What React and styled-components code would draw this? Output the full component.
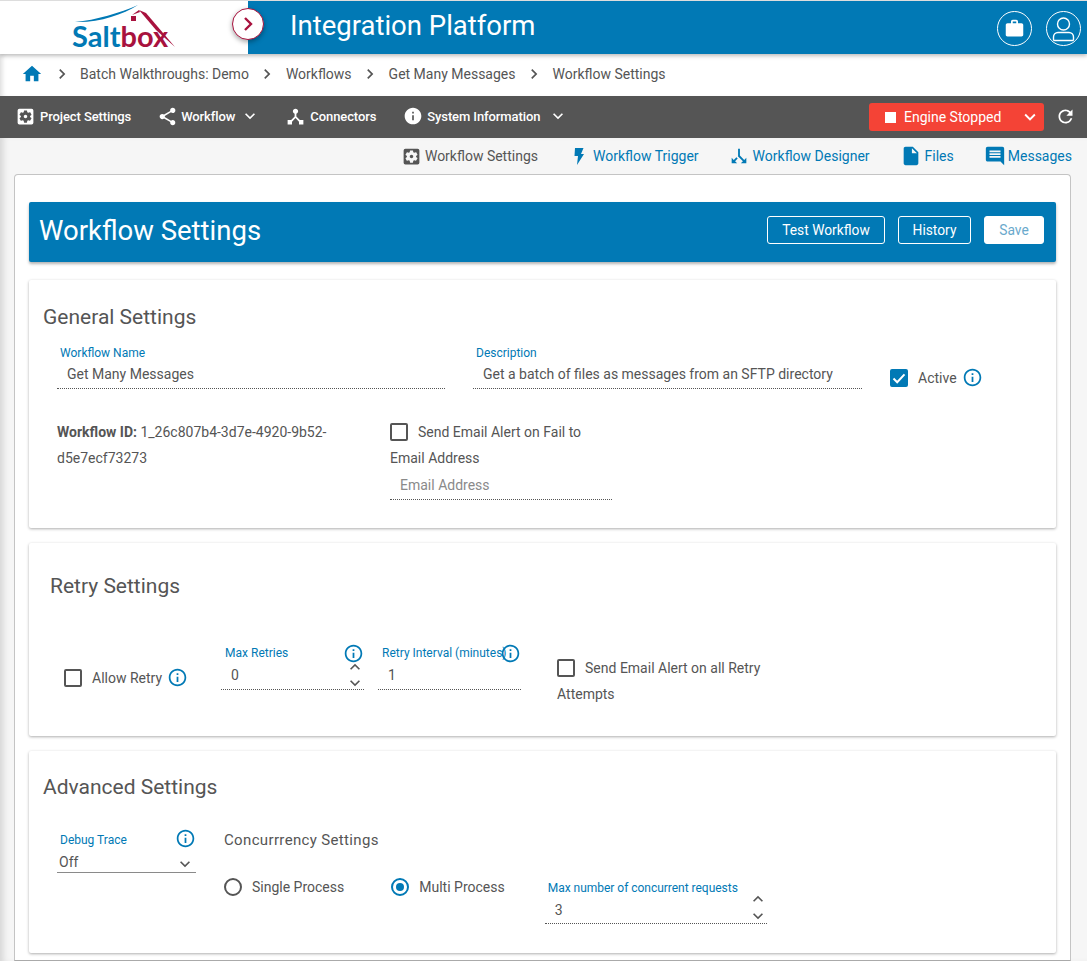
import React from "react";
import styled, { createGlobalStyle } from "styled-components";
import {
  MdHome, MdChevronRight, MdSettingsApplications, MdShare, MdKeyboardArrowDown, MdKeyboardArrowUp,
  MdDeviceHub, MdInfo, MdInfoOutline, MdRefresh, MdCallSplit, MdInsertDriveFile, MdMessage, MdWork,
} from "react-icons/md";

const BLUE = "#0179b5";
const RED = "#a8123e";

const Global = createGlobalStyle`
  html, body { margin: 0; padding: 0; background: #fff; }
  body { font-family: Roboto, "Liberation Sans", sans-serif; color: #555; overflow: hidden; }
  * { box-sizing: border-box; }
`;

const Page = styled.div`
  width: 1087px;
  height: 961px;
  overflow: hidden;
  background: #f6f6f6;
`;

const Header = styled.header`
  position: relative;
  z-index: 3;
  height: 54px;
  border-top: 1px solid #ddd;
  display: flex;
  background: ${BLUE};
  box-shadow: 0 2px 4px rgba(0, 0, 0, 0.25);
`;
const LogoPane = styled.div`
  position: relative;
  width: 248px;
  background: #fff;
  padding: 20px 0 0 72px;
`;
const LogoText = styled.div`
  font-family: Lato, Roboto, sans-serif;
  font-size: 29px;
  line-height: 30px;
  font-weight: 700;
  color: ${BLUE};
  span { color: ${RED}; }
`;
const LogoRoof = styled.svg`
  position: absolute;
  left: 70px;
  top: 3px;
`;
const Collapse = styled.button`
  position: absolute;
  left: 232px;
  top: 7px;
  width: 32px;
  height: 32px;
  border-radius: 50%;
  padding: 0;
  border: 1.5px solid ${RED};
  background: #fff;
  display: flex;
  align-items: center;
  justify-content: center;
  box-shadow: 0 2px 5px rgba(0, 0, 0, 0.35);
`;
const AppTitle = styled.h1`
  flex: 1;
  margin: 0;
  padding-left: 42px;
  font-size: 27.5px;
  line-height: 50px;
  font-weight: 400;
  color: #fff;
`;
const HeaderIcons = styled.div`
  display: flex;
  gap: 14px;
  padding: 10px 6px 0 0;
`;
const RoundIcon = styled.div`
  width: 35px;
  height: 35px;
  border-radius: 50%;
  border: 1px solid #fff;
  color: #fff;
  display: flex;
  align-items: center;
  justify-content: center;
`;

const Crumbs = styled.nav`
  height: 42px;
  background: #fff;
  display: flex;
  align-items: center;
  padding: 0 0 2px 21px;
  font-size: 14px;
  color: #555;
  box-shadow: inset 5px 0 5px -3px rgba(0, 0, 0, 0.14);
`;
const Crumb = styled.span`
  line-height: 20px;
`;
const CrumbSep = styled(MdChevronRight)`
  margin: 0 8.5px;
  font-size: 20px;
  color: #555;
`;

const Toolbar = styled.div`
  height: 42px;
  background: #555;
  display: flex;
  align-items: center;
  padding-left: 15px;
  color: #fff;
  font-size: 13px;
  font-weight: 500;
  letter-spacing: -0.1px;
`;
const ToolItem = styled.div`
  display: flex;
  align-items: center;
  margin-right: ${(p) => p.$gap}px;
  margin-top: -2px;
  gap: ${(p) => p.$iconGap}px;
  white-space: nowrap;
`;
const ToolChevron = styled(MdKeyboardArrowDown)`
  margin-left: ${(p) => p.$left}px;
`;
const ToolSpacer = styled.div`
  flex: 1;
`;
const EngineButton = styled.div`
  width: 175px;
  height: 28px;
  border-radius: 3px;
  background: #f44336;
  display: flex;
  align-items: center;
  padding: 0 3px 0 16px;
  font-size: 14px;
  font-weight: 400;
  letter-spacing: 0;
  color: #fff;
`;
const StopSquare = styled.i`
  width: 11px;
  height: 11px;
  background: #fff;
  margin-right: 8px;
`;
const EngineLabel = styled.span`
  flex: 1;
`;
const Refresh = styled(MdRefresh)`
  font-size: 21px;
  margin: -2px 11px 0 11px;
  color: #fff;
`;

const Main = styled.main`
  height: 823px;
  box-shadow: inset 7px 0 7px -4px rgba(0, 0, 0, 0.14);
`;
const Tabs = styled.div`
  height: 36px;
  display: flex;
  justify-content: flex-end;
  align-items: center;
  padding-right: 15px;
  gap: 30px;
  font-size: 14px;
`;
const Tab = styled.div`
  display: flex;
  align-items: center;
  gap: ${(p) => p.$gap}px;
  margin-right: ${(p) => p.$trim || 0}px;
  color: ${(p) => (p.$active ? "#555" : BLUE)};
  white-space: nowrap;
`;
const SplitIcon = styled(MdCallSplit)`
  transform: rotate(180deg);
`;
const MessageIcon = styled(MdMessage)`
  transform: scaleX(-1);
`;

const Shell = styled.div`
  height: 787px;
  margin: 0 16px 0 14px;
  border: 1px solid #c4c4c4;
  border-bottom-color: #aaa;
  border-radius: 4px 4px 0 0;
  background: #fff;
  padding: 27px 14px 0;
`;
const TitleBar = styled.div`
  height: 60px;
  border-radius: 2px;
  background: ${BLUE};
  display: flex;
  align-items: center;
  padding: 0 12px 4px 10px;
  color: #fff;
  box-shadow: 0 2px 3px rgba(0, 0, 0, 0.3);
`;
const PageTitle = styled.h2`
  flex: 1;
  margin: 0;
  font-size: 27.5px;
  font-weight: 400;
`;
const Action = styled.button`
  width: ${(p) => p.$w}px;
  height: 28px;
  margin-left: 13px;
  padding: 0;
  border-radius: 3px;
  border: 1px solid #fff;
  background: ${(p) => (p.$solid ? "#fff" : "transparent")};
  color: ${(p) => (p.$solid ? "#6aa9cc" : "#fff")};
  font: 400 13.8px Roboto, sans-serif;
`;
const Section = styled.section`
  height: ${(p) => p.$h}px;
  margin-top: ${(p) => p.$top}px;
  background: #fff;
  border-radius: 2px;
  box-shadow: 0 1px 3px rgba(0, 0, 0, 0.32);
  padding-left: 28px;
`;
const SectionTitle = styled.h3`
  margin: 0 0 0 ${(p) => p.$x}px;
  padding-top: ${(p) => p.$top}px;
  font-size: 21px;
  line-height: 24px;
  font-weight: 400;
  color: #555;
`;
const Row = styled.div`
  display: flex;
  align-items: flex-start;
  padding-top: ${(p) => p.$top || 0}px;
`;
const Field = styled.div`
  position: relative;
  flex: none;
  width: ${(p) => p.$w}px;
  height: ${(p) => p.$h || 43}px;
  margin-left: ${(p) => p.$left || 0}px;
  margin-top: ${(p) => p.$top || 0}px;
  border-bottom: 1px dotted #555;
`;
const FieldLabel = styled.label`
  display: block;
  padding-left: ${(p) => p.$pad || 3}px;
  font-size: 12px;
  line-height: 14px;
  letter-spacing: ${(p) => p.$track || 0}px;
  color: ${BLUE};
  white-space: nowrap;
`;
const FieldValue = styled.div`
  margin-top: ${(p) => p.$mt || 5}px;
  padding-left: 10px;
  font-size: 14px;
  line-height: 18px;
  color: ${(p) => (p.$muted ? "#8a8a8a" : "#555")};
  white-space: nowrap;
`;
const Info = styled(MdInfoOutline)`
  font-size: 21px;
  flex: none;
  margin-left: -5px;
  color: ${BLUE};
`;
const FieldInfo = styled(MdInfoOutline)`
  position: absolute;
  right: 0;
  top: ${(p) => p.$top}px;
  font-size: 21px;
  color: ${BLUE};
`;
const Spinner = styled.div`
  position: absolute;
  right: -1px;
  top: ${(p) => p.$top}px;
  display: flex;
  flex-direction: column;
  color: #555;
  svg { display: block; width: 20px; height: 20px; margin: ${(p) => p.$tight}px 0; }
`;
const CheckBox = styled.span`
  width: 18px;
  height: 18px;
  flex: none;
  border-radius: 2px;
  border: 2px solid ${(p) => (p.$on ? BLUE : "#555")};
  background: ${(p) => (p.$on ? BLUE : "#fff")};
  display: inline-flex;
  align-items: center;
  justify-content: center;
`;
const CheckLabel = styled.div`
  display: flex;
  align-items: center;
  gap: 10px;
  margin-left: ${(p) => p.$left || 0}px;
  margin-top: ${(p) => p.$top || 0}px;
  font-size: 14px;
  line-height: 18px;
  white-space: nowrap;
`;
const Column = styled.div`
  width: ${(p) => p.$w}px;
  margin-left: ${(p) => p.$left || 0}px;
  margin-top: ${(p) => p.$top || 0}px;
  font-size: 14px;
  line-height: 26px;
  flex: none;
`;
const Wrapped = styled.div`
  margin-top: 4px;
  line-height: 26px;
`;
const Select = styled.div`
  position: relative;
  flex: none;
  width: 139px;
  height: 40px;
  border-bottom: 1px solid #8a8a8a;
`;
const SelectValue = styled.div`
  margin-top: 6px;
  padding-left: 2px;
  font-size: 14px;
  line-height: 18px;
`;
const SelectChevron = styled(MdKeyboardArrowDown)`
  position: absolute;
  right: 1px;
  top: 21px;
  font-size: 20px;
`;
const SubTitle = styled.div`
  font-size: 15px;
  line-height: 20px;
  letter-spacing: 0.35px;
`;
const Radio = styled.span`
  width: 18px;
  height: 18px;
  border-radius: 50%;
  flex: none;
  border: 2px solid ${(p) => (p.$on ? BLUE : "#555")};
  display: inline-flex;
  align-items: center;
  justify-content: center;
  &::after {
    content: "";
    width: 8px;
    height: 8px;
    border-radius: 50%;
    background: ${(p) => (p.$on ? BLUE : "transparent")};
  }
`;

const Tick = () => (
  <svg width="14" height="14" viewBox="0 0 14 14"><path d="M1.5 7.5l3.7 3.7L12.5 3.4" fill="none" stroke="#fff" strokeWidth="2" /></svg>
);
const Bolt = () => (
  <svg width="25" height="17" viewBox="-6 0 25 17"><path d="M1 0H9.5L7 6H10L3 17L4 8H0.5Z" fill={BLUE} /></svg>
);
const Person = () => (
  <svg width="33" height="33" viewBox="0 0 33 33" fill="none" stroke="#fff" strokeWidth="1.4">
    <circle cx="16.5" cy="12" r="6" />
    <path d="M11 20.5h11a4.5 4.5 0 0 1 4.5 4.5v2.5a1 1 0 0 1-1 1h-18a1 1 0 0 1-1-1V25a4.5 4.5 0 0 1 4.5-4.5Z" />
  </svg>
);

export default function App() {
  return (
    <Page>
      <Global />
      <Header>
        <LogoPane>
          <LogoRoof width="110" height="46" viewBox="0 0 110 46">
            <path d="M5 18C26 16 50 9 68 1C52 11 28 19 5 18Z" fill={BLUE} />
            <path d="M69 6L76 9L105 43L86 26Z" fill={RED} />
            <path d="M69 6L62 11L70 8Z" fill={RED} />
            <rect x="61" y="12" width="5" height="5" fill={RED} />
          </LogoRoof>
          <LogoText>Salt<span>box</span></LogoText>
          <Collapse aria-label="Expand">
            <svg width="14" height="16" viewBox="0 0 14 16"><path d="M4 2l6 6-6 6" fill="none" stroke={RED} strokeWidth="2.4" /></svg>
          </Collapse>
        </LogoPane>
        <AppTitle>Integration Platform</AppTitle>
        <HeaderIcons>
          <RoundIcon><MdWork size={21} /></RoundIcon>
          <RoundIcon><Person /></RoundIcon>
        </HeaderIcons>
      </Header>

      <Crumbs>
        <MdHome size={22} color={BLUE} />
        <CrumbSep /><Crumb>Batch Walkthroughs: Demo</Crumb>
        <CrumbSep /><Crumb>Workflows</Crumb>
        <CrumbSep /><Crumb>Get Many Messages</Crumb>
        <CrumbSep /><Crumb>Workflow Settings</Crumb>
      </Crumbs>

      <Toolbar>
        <ToolItem $gap={26} $iconGap={4}><MdSettingsApplications size={21} />Project Settings</ToolItem>
        <ToolItem $gap={25} $iconGap={3}><MdShare size={21} />Workflow<ToolChevron $left={2} size={20} /></ToolItem>
        <ToolItem $gap={27} $iconGap={4}><MdDeviceHub size={21} />Connectors</ToolItem>
        <ToolItem $gap={0} $iconGap={4}><MdInfo size={20} />System Information<ToolChevron $left={4} size={20} /></ToolItem>
        <ToolSpacer />
        <EngineButton><StopSquare /><EngineLabel>Engine Stopped</EngineLabel><MdKeyboardArrowDown size={22} /></EngineButton>
        <Refresh />
      </Toolbar>

      <Main>
        <Tabs>
          <Tab $active $gap={3}><MdSettingsApplications size={21} />Workflow Settings</Tab>
          <Tab $gap={0} $trim={-1}><Bolt />Workflow Trigger</Tab>
          <Tab $gap={3}><SplitIcon size={22} />Workflow Designer</Tab>
          <Tab $gap={3}><MdInsertDriveFile size={22} />Files</Tab>
          <Tab $gap={2}><MessageIcon size={22} />Messages</Tab>
        </Tabs>

        <Shell>
          <TitleBar>
            <PageTitle>Workflow Settings</PageTitle>
            <Action $w={118}>Test Workflow</Action>
            <Action $w={73}>History</Action>
            <Action $w={60} $solid>Save</Action>
          </TitleBar>

          <Section $top={18} $h={248}>
            <SectionTitle $x={-14} $top={25}>General Settings</SectionTitle>
            <Row $top={17}>
              <Field $w={388}><FieldLabel>Workflow Name</FieldLabel><FieldValue>Get Many Messages</FieldValue></Field>
              <Field $w={389} $left={28}><FieldLabel>Description</FieldLabel><FieldValue>Get a batch of files as messages from an SFTP directory</FieldValue></Field>
              <CheckLabel $left={28} $top={21}><CheckBox $on><Tick /></CheckBox>Active<Info /></CheckLabel>
            </Row>
            <Row $top={30}>
              <Column $w={290}><b>Workflow ID:</b> 1_26c807b4-3d7e-4920-9b52-d5e7ecf73273</Column>
              <Column $w={222} $left={43}>
                <CheckLabel $top={4}><CheckBox />Send Email Alert on Fail to</CheckLabel>
                <Wrapped>Email Address</Wrapped>
                <Field $w={222} $h={24}><FieldValue $muted>Email Address</FieldValue></Field>
              </Column>
            </Row>
          </Section>

          <Section $top={15} $h={193}>
            <SectionTitle $x={-7} $top={31}>Retry Settings</SectionTitle>
            <Row $top={48}>
              <CheckLabel $left={7} $top={21}><CheckBox />Allow Retry<Info /></CheckLabel>
              <Field $w={143} $left={33} $h={44}><FieldLabel $pad={4}>Max Retries</FieldLabel><FieldValue $mt={6}>0</FieldValue><FieldInfo $top={-3} /><Spinner $top={13} $tight={-2}><MdKeyboardArrowUp /><MdKeyboardArrowDown /></Spinner></Field>
              <Field $w={143} $left={14} $h={44}><FieldLabel $pad={4}>Retry Interval (minutes)</FieldLabel><FieldValue $mt={6}>1</FieldValue><FieldInfo $top={-3} /></Field>
              <Column $w={220} $left={36} $top={13}>
                <CheckLabel><CheckBox />Send Email Alert on all Retry</CheckLabel>
                <Wrapped>Attempts</Wrapped>
              </Column>
            </Row>
          </Section>

          <Section $top={15} $h={202}>
            <SectionTitle $x={-14} $top={24}>Advanced Settings</SectionTitle>
            <Row $top={34}>
              <Select><FieldLabel>Debug Trace</FieldLabel><SelectValue>Off</SelectValue><SelectChevron /><FieldInfo $top={-5} /></Select>
              <Column $w={700} $left={28} $top={-3}>
                <SubTitle>Concurrrency Settings</SubTitle>
                <Row $top={19}>
                  <CheckLabel $top={9}><Radio />Single Process</CheckLabel>
                  <CheckLabel $left={47} $top={9}><Radio $on />Multi Process</CheckLabel>
                  <Field $w={222} $left={40} $top={12}>
                    <FieldLabel $track={-0.02}>Max number of concurrent requests</FieldLabel>
                    <FieldValue $mt={6}>3</FieldValue>
                    <Spinner $top={9} $tight={-1.5}><MdKeyboardArrowUp /><MdKeyboardArrowDown /></Spinner>
                  </Field>
                </Row>
              </Column>
            </Row>
          </Section>
        </Shell>
      </Main>
    </Page>
  );
}
